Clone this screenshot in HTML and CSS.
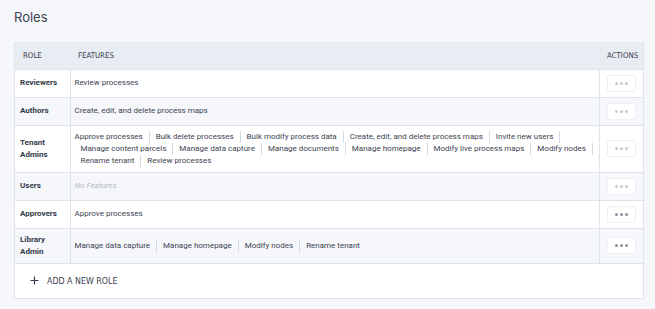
FILE: index.html
```html
<!DOCTYPE html>
<html>
<head>
<meta charset="utf-8">
<link rel="stylesheet" href="styles.css">
</head>
<body>
<div class="page">
  <h1 class="title">Roles</h1>
  <div class="card">
    <table class="roles">
      <thead>
        <tr>
          <th class="c-role">Role</th>
          <th class="c-feat">Features</th>
          <th class="c-act">Actions</th>
        </tr>
      </thead>
      <tbody>
        <tr>
          <td class="c-role">Reviewers</td>
          <td class="c-feat"><div class="chips"><span class="chip">Review processes</span></div></td>
          <td class="c-act"><button class="more dim"><span></span><span></span><span></span></button></td>
        </tr>
        <tr class="alt">
          <td class="c-role">Authors</td>
          <td class="c-feat"><div class="chips"><span class="chip">Create, edit, and delete process maps</span></div></td>
          <td class="c-act"><button class="more dim"><span></span><span></span><span></span></button></td>
        </tr>
        <tr>
          <td class="c-role">Tenant Admins</td>
          <td class="c-feat"><div class="chips sep">
            <span class="chip">Approve processes</span><span class="chip">Bulk delete processes</span><span class="chip">Bulk modify process data</span><span class="chip">Create, edit, and delete process maps</span><span class="chip">Invite new users</span><span class="chip">Manage content parcels</span><span class="chip">Manage data capture</span><span class="chip">Manage documents</span><span class="chip">Manage homepage</span><span class="chip">Modify live process maps</span><span class="chip">Modify nodes</span><span class="chip">Rename tenant</span><span class="chip">Review processes</span>
          </div></td>
          <td class="c-act"><button class="more dim"><span></span><span></span><span></span></button></td>
        </tr>
        <tr class="alt">
          <td class="c-role">Users</td>
          <td class="c-feat"><span class="none">No Features</span></td>
          <td class="c-act"><button class="more dim"><span></span><span></span><span></span></button></td>
        </tr>
        <tr>
          <td class="c-role">Approvers</td>
          <td class="c-feat"><div class="chips"><span class="chip">Approve processes</span></div></td>
          <td class="c-act"><button class="more"><span></span><span></span><span></span></button></td>
        </tr>
        <tr class="alt">
          <td class="c-role">Library Admin</td>
          <td class="c-feat"><div class="chips sep">
            <span class="chip">Manage data capture</span><span class="chip">Manage homepage</span><span class="chip">Modify nodes</span><span class="chip">Rename tenant</span>
          </div></td>
          <td class="c-act"><button class="more"><span></span><span></span><span></span></button></td>
        </tr>
      </tbody>
    </table>
    <div class="add">
      <svg class="plus" width="9" height="9" viewBox="0 0 9 9"><path d="M4.5 0.5v8M0.5 4.5h8" stroke="#3b4050" stroke-width="1.2" fill="none"/></svg>
      <span class="add-label">Add a new role</span>
    </div>
  </div>
</div>
</body>
</html>
```
FILE: styles.css
```css
* { box-sizing: border-box; }
html, body { margin: 0; padding: 0; }
body {
  background: #f5f7fa;
  font-family: Roboto, "Noto Sans", sans-serif;
  color: #3d4352;
  width: 655px;
  height: 309px;
  overflow: hidden;
}
.page { padding: 9px 11px 0 14px; }
.title {
  margin: 0 0 17px;
  font-family: Inter, Roboto, sans-serif;
  font-size: 13px;
  line-height: 16px;
  font-weight: 400;
  color: #3b4252;
}
.card {
  background: #fff;
  border: 1px solid #dfe3ea;
  border-top: none;
}
.roles {
  width: 100%;
  border-collapse: collapse;
  table-layout: fixed;
}
.roles th {
  background: #e8edf4;
  height: 27px;
  padding: 0 8px;
  text-align: left;
  font-family: "DejaVu Sans Condensed", "DejaVu Sans", sans-serif;
  font-stretch: condensed;
  font-weight: 400;
  font-size: 7.8px;
  text-transform: uppercase;
  color: #343a48;
}
.roles th.c-act { text-align: right; padding-right: 6px; }
.roles th.c-feat { padding-left: 8px; }
.c-role { width: 55px; }
.c-act { width: 44px; }
.roles td {
  border-top: 1px solid #dfe3ea;
  font-size: 8px;
  line-height: 12px;
  padding: 0 5px;
  height: 28px;
  vertical-align: middle;
}
.roles td.c-role {
  font-weight: 700;
  border-right: 1px solid #dfe3ea;
  padding: 5px 5px;
  color: #333a47;
}
.roles td.c-act {
  border-left: 1px solid #dfe3ea;
  padding: 0 5px;
  text-align: center;
}
.roles tr.alt td { background: #f5f7fa; }
.roles td.c-feat { padding: 5px 2px 5px 4px; }
.chips { display: flex; flex-wrap: wrap; }
.chip {
  padding: 0 6px;
  line-height: 12px;
  border-right: 1px solid #d6dbe3;
  white-space: nowrap;
}
.chips .chip:first-child { padding-left: 0; }
.chips:not(.sep) .chip { border-right: none; }
.chips.sep .chip:last-child { border-right: none; }
.none { font-style: italic; color: #b4bac4; }
.more {
  width: 29px;
  height: 17px;
  background: #fff;
  border: 1px solid #eef0f4;
  border-radius: 2px;
  display: inline-flex;
  align-items: center;
  justify-content: center;
  gap: 2px;
  padding: 0;
  vertical-align: middle;
}
.more span {
  width: 3px;
  height: 3px;
  border-radius: 50%;
  background: #8a909c;
}
.more.dim span { background: #c5cad3; }
.add {
  height: 35px;
  border-top: 1px solid #dfe3ea;
  display: flex;
  align-items: center;
  padding-left: 15px;
  gap: 8px;
}
.add-label {
  font-family: "DejaVu Sans Condensed", "DejaVu Sans", sans-serif;
  font-stretch: condensed;
  font-size: 8.8px;
  text-transform: uppercase;
  color: #3b4050;
}
```
